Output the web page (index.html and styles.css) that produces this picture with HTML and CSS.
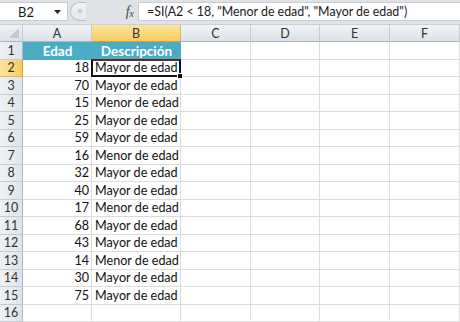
FILE: index.html
```html
<!DOCTYPE html>
<html lang="es">
<head>
<meta charset="utf-8">
<title>Hoja</title>
<link rel="stylesheet" href="styles.css">
</head>
<body>
<div class="app">
  <div class="fbar">
    <div class="namebox">
      <span class="ref">B2</span>
      <svg class="caret" width="7" height="4" viewBox="0 0 7 4"><path d="M0 0H7L3.5 4Z" fill="#222"/></svg>
    </div>
    <div class="mid">
      <span class="grip"></span>
      <span class="fx">f<sub>x</sub></span>
    </div>
    <div class="formula">=SI(A2 &lt; 18, "Menor de edad", "Mayor de edad")</div>
  </div>
  <div class="sheet">
    <div class="corner"><svg width="10" height="10" viewBox="0 0 10 10"><path d="M10 0V10H0Z" fill="#c3c9d1"/></svg></div>
    <div class="ch">A</div>
    <div class="ch sel">B</div>
    <div class="ch">C</div>
    <div class="ch">D</div>
    <div class="ch">E</div>
    <div class="ch last">F</div>

    <div class="rh">1</div>
    <div class="th">Edad</div>
    <div class="th">Descripción</div>
    <div class="c"></div><div class="c"></div><div class="c"></div><div class="c last"></div>

    <div class="rh sel">2</div>
    <div class="c num">18</div>
    <div class="c active">Mayor de edad<span class="handle"></span></div>
    <div class="c"></div><div class="c"></div><div class="c"></div><div class="c last"></div>

    <div class="rh">3</div><div class="c num">70</div><div class="c">Mayor de edad</div><div class="c"></div><div class="c"></div><div class="c"></div><div class="c last"></div>
    <div class="rh">4</div><div class="c num">15</div><div class="c">Menor de edad</div><div class="c"></div><div class="c"></div><div class="c"></div><div class="c last"></div>
    <div class="rh">5</div><div class="c num">25</div><div class="c">Mayor de edad</div><div class="c"></div><div class="c"></div><div class="c"></div><div class="c last"></div>
    <div class="rh">6</div><div class="c num">59</div><div class="c">Mayor de edad</div><div class="c"></div><div class="c"></div><div class="c"></div><div class="c last"></div>
    <div class="rh">7</div><div class="c num">16</div><div class="c">Menor de edad</div><div class="c"></div><div class="c"></div><div class="c"></div><div class="c last"></div>
    <div class="rh">8</div><div class="c num">32</div><div class="c">Mayor de edad</div><div class="c"></div><div class="c"></div><div class="c"></div><div class="c last"></div>
    <div class="rh">9</div><div class="c num">40</div><div class="c">Mayor de edad</div><div class="c"></div><div class="c"></div><div class="c"></div><div class="c last"></div>
    <div class="rh">10</div><div class="c num">17</div><div class="c">Menor de edad</div><div class="c"></div><div class="c"></div><div class="c"></div><div class="c last"></div>
    <div class="rh">11</div><div class="c num">68</div><div class="c">Mayor de edad</div><div class="c"></div><div class="c"></div><div class="c"></div><div class="c last"></div>
    <div class="rh">12</div><div class="c num">43</div><div class="c">Mayor de edad</div><div class="c"></div><div class="c"></div><div class="c"></div><div class="c last"></div>
    <div class="rh">13</div><div class="c num">14</div><div class="c">Menor de edad</div><div class="c"></div><div class="c"></div><div class="c"></div><div class="c last"></div>
    <div class="rh">14</div><div class="c num">30</div><div class="c">Mayor de edad</div><div class="c"></div><div class="c"></div><div class="c"></div><div class="c last"></div>
    <div class="rh">15</div><div class="c num">75</div><div class="c">Mayor de edad</div><div class="c"></div><div class="c"></div><div class="c"></div><div class="c last"></div>
    <div class="rh">16</div><div class="c"></div><div class="c"></div><div class="c"></div><div class="c"></div><div class="c"></div><div class="c last"></div>
  </div>
</div>
</body>
</html>
```

FILE: styles.css
```css
* { box-sizing: border-box; }
html, body { margin: 0; padding: 0; background: #ffffff; }
body { width: 460px; height: 322px; overflow: hidden; font-family: Lato, "Liberation Sans", sans-serif; }
.app { width: 460px; height: 322px; overflow: hidden; }

.fbar {
  display: flex;
  height: 25px;
  padding: 2px 0 3px 0;
  background: #dfe3e8;
  border-bottom: 1px solid #c9cfd7;
}
.namebox {
  width: 68px;
  background: #fff;
  border: 1px solid #c6ccd4;
  border-left: none;
  display: flex;
  align-items: center;
  justify-content: space-between;
  padding: 0 6px 0 18px;
  font-size: 13px;
  color: #1a1a1a;
}
.mid {
  width: 70px;
  display: flex;
  align-items: center;
  justify-content: space-between;
  padding: 0 6px 0 2px;
}
.grip {
  width: 16px;
  height: 19px;
  border: 1px solid #b9c0c9;
  border-right: none;
  border-radius: 10px 0 0 10px;
  background: radial-gradient(ellipse 4px 3px at 9px 8px, #c9ced5 60%, transparent 70%), linear-gradient(#f2f4f6, #e4e7eb);
}
.fx {
  font-family: "Liberation Serif", serif;
  font-style: italic;
  font-size: 14px;
  color: #444;
  margin-right: -2px;
}
.fx sub { font-size: 10px; vertical-align: -1px; }
.formula {
  flex: 1;
  background: #fff;
  border: 1px solid #c6ccd4;
  border-right: none;
  display: flex;
  align-items: center;
  padding-left: 8px;
  font-size: 12.4px;
  color: #1a1a1a;
  white-space: nowrap;
}

.sheet {
  display: grid;
  grid-template-columns: 23px 69px 89px 70px 69px 70px 70px;
  grid-template-rows: 17px repeat(16, 17.5px);
  font-size: 12.6px;
  color: #111;
}
.corner {
  background: linear-gradient(#eef1f4, #dde2e8);
  border-right: 1px solid #c4cbd4;
  border-bottom: 1px solid #a9b7c6;
  display: flex;
  align-items: flex-end;
  justify-content: flex-end;
  padding: 0 3px 3px 0;
}
.ch {
  background: linear-gradient(#f1f3f6, #dde2e8);
  border-right: 1px solid #c4cbd4;
  border-bottom: 1px solid #a9b7c6;
  display: flex;
  align-items: center;
  justify-content: center;
  font-size: 12.5px;
  color: #333;
}
.ch.sel {
  background: linear-gradient(#fbe49e, #f6cd62);
  border-right: 1px solid #f0b24a;
  border-bottom: 1px solid #e59b2c;
}
.rh {
  background: linear-gradient(90deg, #eef1f4, #dfe4ea);
  border-right: 1px solid #a9b7c6;
  border-bottom: 1px solid #c4cbd4;
  display: flex;
  align-items: center;
  justify-content: center;
  font-size: 12.5px;
  color: #333;
}
.rh.sel {
  background: linear-gradient(90deg, #fbe49e, #f6cd62);
  border-right: 1px solid #e59b2c;
  border-bottom: 1px solid #f0b24a;
}
.c {
  border-right: 1px solid #dadcdd;
  border-bottom: 1px solid #dadcdd;
  display: flex;
  align-items: center;
  padding: 0 3px;
  white-space: nowrap;
  position: relative;
}
.c.num { justify-content: flex-end; padding-right: 2px; }
.th {
  background: #4bacc6;
  color: #fff;
  font-weight: bold;
  display: flex;
  align-items: center;
  justify-content: center;
  font-size: 13.5px;
}
.c.active::before {
  content: "";
  position: absolute;
  left: -1px;
  top: -1px;
  right: -1px;
  bottom: -1px;
  border: 2px solid #111;
  border-top-color: #5a2b22;
  pointer-events: none;
}
.handle {
  position: absolute;
  right: -3px;
  bottom: -3px;
  width: 6px;
  height: 6px;
  background: #111;
  border: 1px solid #fff;
  z-index: 2;
}
```
